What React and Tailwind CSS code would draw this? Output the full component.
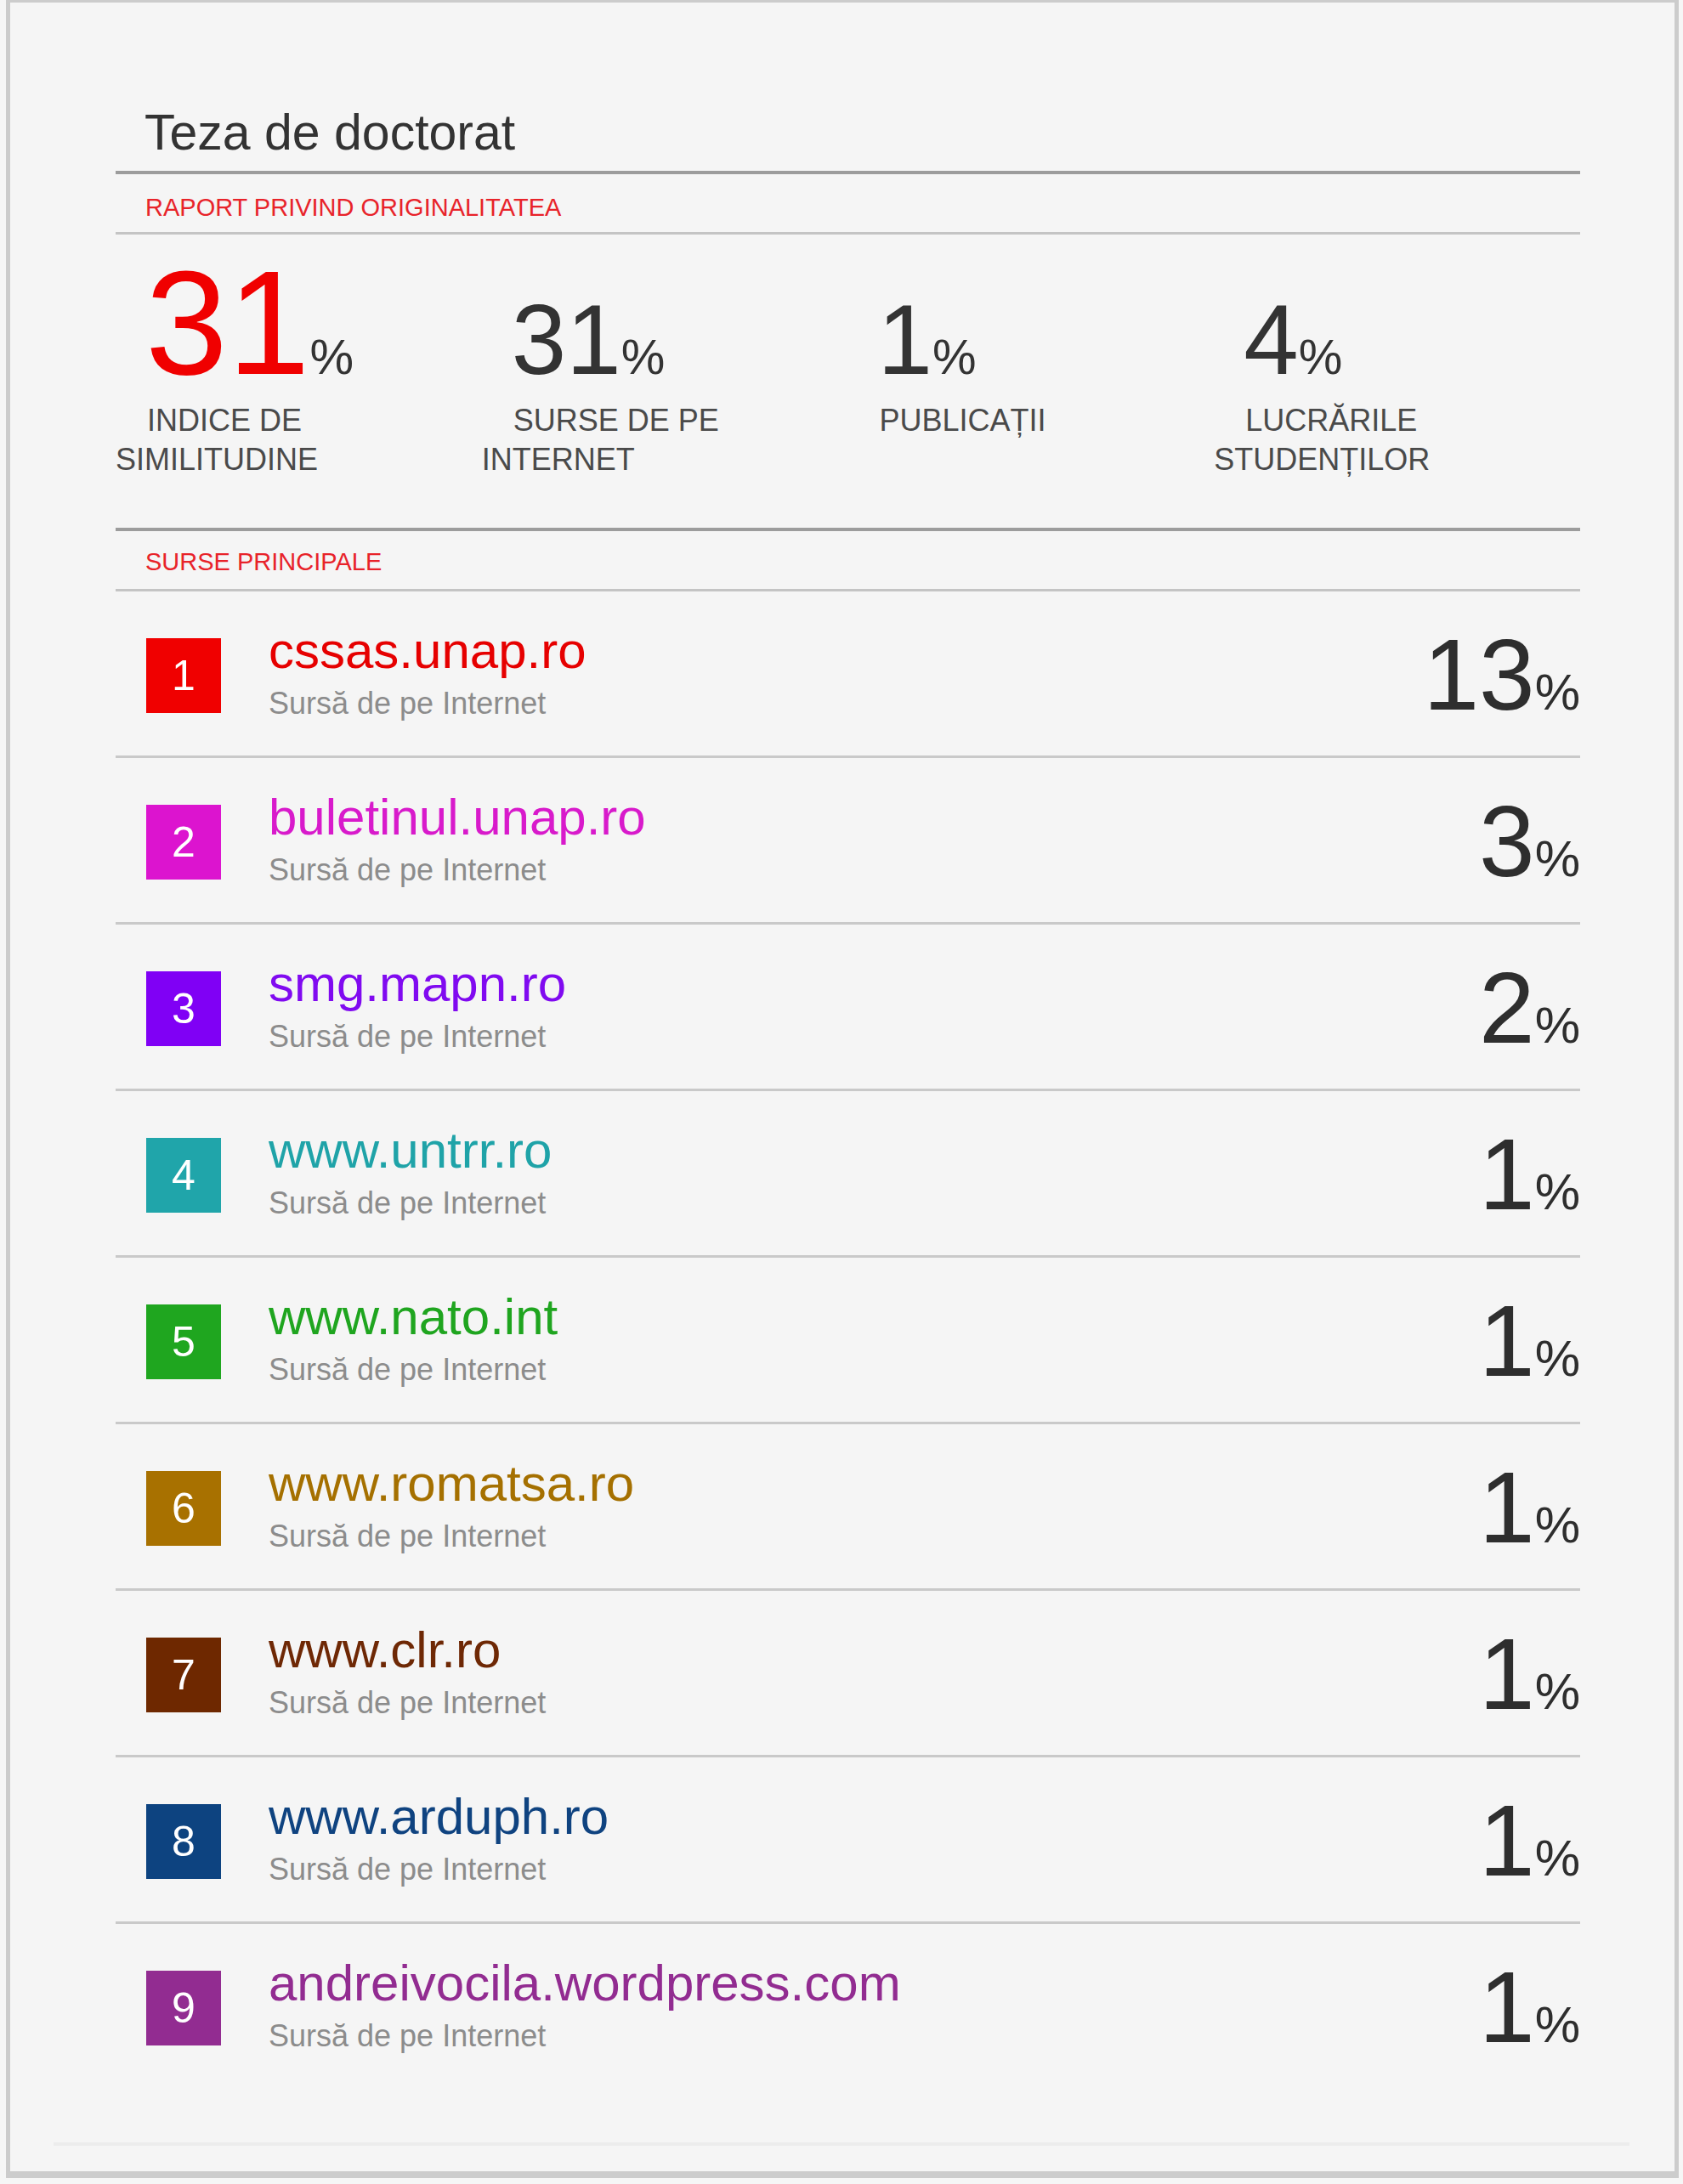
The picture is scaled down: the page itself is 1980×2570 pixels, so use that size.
const sources = [
  { n: 1, domain: 'cssas.unap.ro', color: 'bg-[#f00000]', text: 'text-[#e60000]', pct: '13' },
  { n: 2, domain: 'buletinul.unap.ro', color: 'bg-[#dc14cf]', text: 'text-[#d81acb]', pct: '3' },
  { n: 3, domain: 'smg.mapn.ro', color: 'bg-[#8000f5]', text: 'text-[#800af0]', pct: '2' },
  { n: 4, domain: 'www.untrr.ro', color: 'bg-[#20a5aa]', text: 'text-[#1fa3a8]', pct: '1' },
  { n: 5, domain: 'www.nato.int', color: 'bg-[#1fa61f]', text: 'text-[#1fa51f]', pct: '1' },
  { n: 6, domain: 'www.romatsa.ro', color: 'bg-[#a87100]', text: 'text-[#a57000]', pct: '1' },
  { n: 7, domain: 'www.clr.ro', color: 'bg-[#6e2800]', text: 'text-[#6e2805]', pct: '1' },
  { n: 8, domain: 'www.arduph.ro', color: 'bg-[#0d4380]', text: 'text-[#0f4380]', pct: '1' },
  { n: 9, domain: 'andreivocila.wordpress.com', color: 'bg-[#922c91]', text: 'text-[#922c91]', pct: '1' },
];

const stats = [
  { value: '31', big: true, label: ['INDICE DE', 'SIMILITUDINE'] },
  { value: '31', label: ['SURSE DE PE', 'INTERNET'] },
  { value: '1', label: ['PUBLICAȚII'] },
  { value: '4', label: ['LUCRĂRILE', 'STUDENȚILOR'] },
];

function SourceRow({ s, last }) {
  return (
    <div
      className={`flex h-[196px] items-start ${
        last ? '' : 'border-b-[3px] border-[#c9c9c9]'
      }`}
    >
      <div
        className={`ml-[36px] mt-[55px] flex h-[88px] w-[88px] shrink-0 items-center justify-center text-[50px] leading-none text-white ${s.color}`}
      >
        {s.n}
      </div>
      <div className="ml-[56px] flex flex-col">
        <div className={`mt-[40px] text-[60px] leading-[60px] ${s.text}`}>{s.domain}</div>
        <div className="mt-[14px] text-[36px] leading-[36px] text-[#8c8c8c]">Sursă de pe Internet</div>
      </div>
      <div className="ml-auto mt-[39px] whitespace-nowrap text-[118px] leading-none text-[#2e2e2e]">
        {s.pct}
        <span className="text-[60px] leading-none">%</span>
      </div>
    </div>
  );
}

export default function App() {
  return (
    <div className="min-h-[2570px] bg-[#f6f6f6] pl-[7px] font-['Liberation_Sans',Arial,sans-serif]">
      <div className="h-[2563px] w-[1968px] border-x-[5px] border-b-[8px] border-t-[3px] border-[#cccccc] bg-[#f5f5f5] pl-[124px] pr-[111px]">
        <h1 className="mt-[124px] pl-[34px] text-[59px] leading-[59px] text-[#333333]">Teza de doctorat</h1>
        <div className="mt-[15px] h-[4px] bg-[#9c9c9c]" />
        <div className="mt-[25px] pl-[35px] text-[29px] leading-[29px] text-[#e8232a]">
          RAPORT PRIVIND ORIGINALITATEA
        </div>
        <div className="mt-[14px] h-[3px] bg-[#c4c4c4]" />

        <div className="mt-[17px] grid grid-cols-4 items-baseline">
          {stats.map((st, i) => (
            <div
              key={'n' + i}
              className={`whitespace-nowrap pl-[35px] leading-none ${
                st.big ? 'text-[174px] text-[#f00000]' : 'text-[116px] text-[#333333]'
              }`}
            >
              {st.value}
              <span className="text-[58px] leading-none text-[#333333]">%</span>
            </div>
          ))}
          {stats.map((st, i) => (
            <div
              key={'l' + i}
              className="mt-[5px] indent-[37px] text-[36px] leading-[46px] text-[#4a4a4a]"
            >
              {st.label[0]}
              {st.label[1] && (
                <>
                  <br />
                  {st.label[1]}
                </>
              )}
            </div>
          ))}
        </div>

        <div className="mt-[57px] h-[4px] bg-[#9c9c9c]" />
        <div className="mt-[22px] pl-[35px] text-[29px] leading-[29px] text-[#e8232a]">SURSE PRINCIPALE</div>
        <div className="mt-[17px] h-[3px] bg-[#c4c4c4]" />

        <div className="flex flex-col">
          {sources.map((s, i) => (
            <SourceRow key={s.n} s={s} last={i === sources.length - 1} />
          ))}
        </div>

        <div className="-ml-[73px] -mr-[58px] mt-[61px] h-[4px] bg-[#ececec]" />
      </div>
    </div>
  );
}
